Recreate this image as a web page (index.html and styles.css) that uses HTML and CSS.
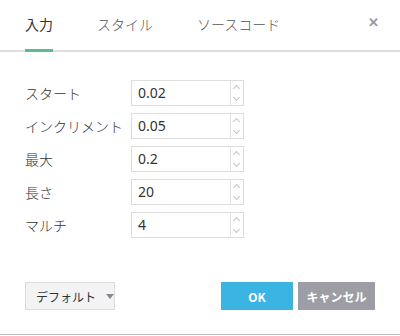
FILE: index.html
```html
<!DOCTYPE html>
<html lang="ja">
<head>
    <meta charset="UTF-8" />
    <meta name="viewport" content="width=device-width, initial-scale=1.0"/>
    <title>入力</title>
    <link rel="stylesheet" href="styles.css">
</head>
<body>
    <div class="dialog">
        <div class="tabs">
            <span class="tab active">入力</span>
            <span class="tab">スタイル</span>
            <span class="tab">ソースコード</span>
            <span class="close">&#x2715;</span>
        </div>

        <form class="fields">
            <div class="row">
                <label>スタート</label>
                <div class="spin"><span class="value">0.02</span><span class="arrows"><i class="up"></i><i class="down"></i></span></div>
            </div>
            <div class="row">
                <label>インクリメント</label>
                <div class="spin"><span class="value">0.05</span><span class="arrows"><i class="up"></i><i class="down"></i></span></div>
            </div>
            <div class="row">
                <label>最大</label>
                <div class="spin"><span class="value">0.2</span><span class="arrows"><i class="up"></i><i class="down"></i></span></div>
            </div>
            <div class="row">
                <label>長さ</label>
                <div class="spin"><span class="value">20</span><span class="arrows"><i class="up"></i><i class="down"></i></span></div>
            </div>
            <div class="row">
                <label>マルチ</label>
                <div class="spin"><span class="value">4</span><span class="arrows"><i class="up"></i><i class="down"></i></span></div>
            </div>
        </form>

        <div class="footer">
            <button type="button" class="btn-default">デフォルト<span class="caret"></span></button>
            <div class="actions">
                <button type="button" class="btn-ok">OK</button>
                <button type="button" class="btn-cancel">キャンセル</button>
            </div>
        </div>
    </div>
</body>
</html>
```

FILE: styles.css
```css
body {
    margin: 0;
    background: #ffffff;
    font-family: "Noto Sans CJK JP", "Noto Sans", sans-serif;
    color: #444;
}
.dialog {
    width: 400px;
    height: 335px;
    border-bottom: 1px solid #bbb;
    box-sizing: border-box;
    display: flex;
    flex-direction: column;
}
.tabs {
    display: flex;
    align-items: flex-start;
    height: 50px;
    padding: 0 21px 0 25px;
    border-bottom: 2px solid #ddd;
    position: relative;
}
.tab {
    font-size: 14px;
    font-weight: 300;
    line-height: 20px;
    padding-top: 14px;
    height: 36px;
    margin-right: 44px;
    color: #555;
    position: relative;
}
.tab.active {
    color: #333;
    font-weight: normal;
}
.tab.active::after {
    content: "";
    position: absolute;
    left: 0;
    right: 0;
    bottom: -2px;
    height: 3px;
    background: #5bbd8c;
}
.close {
    margin-left: auto;
    font-size: 13px;
    line-height: 20px;
    padding-top: 12px;
    color: #999;
    font-weight: bold;
}
.fields {
    margin: 0;
    padding: 28px 0 0 25px;
    display: flex;
    flex-direction: column;
    gap: 7px;
}
.row {
    display: flex;
    align-items: center;
    height: 26px;
}
.row label {
    width: 106px;
    font-size: 14px;
    font-weight: 300;
    color: #333;
}
.spin {
    width: 113px;
    height: 26px;
    box-sizing: border-box;
    border: 1px solid #ddd;
    display: flex;
}
.value {
    flex: 1;
    padding-left: 6px;
    font-size: 14px;
    line-height: 24px;
    font-family: "Noto Sans", sans-serif;
    color: #333;
}
.arrows {
    width: 12px;
    border-left: 1px solid #e2e2e2;
    display: flex;
    flex-direction: column;
}
.arrows i {
    flex: 1;
    position: relative;
}
.arrows i::before {
    content: "";
    position: absolute;
    left: 3px;
    width: 4px;
    height: 4px;
    border-left: 1px solid #c4c4c4;
    border-top: 1px solid #c4c4c4;
}
.arrows .up::before {
    top: 5px;
    transform: rotate(45deg);
}
.arrows .down::before {
    top: 2px;
    transform: rotate(225deg);
}
.footer {
    display: flex;
    align-items: center;
    justify-content: space-between;
    padding: 0 25px;
    margin-top: 44px;
}
.footer button {
    height: 28px;
    border: none;
    font-family: "Noto Sans CJK JP", sans-serif;
    font-size: 12px;
    cursor: pointer;
}
.btn-default {
    width: 90px;
    background: #f3f3f5;
    border: 1px solid #dcdcdc !important;
    color: #333;
    display: flex;
    align-items: center;
    padding: 0 0 0 10px;
}
.caret {
    margin-left: 10px;
    border-left: 4px solid transparent;
    border-right: 4px solid transparent;
    border-top: 5px solid #888;
}
.actions {
    display: flex;
    gap: 5px;
}
.btn-ok {
    width: 72px;
    background: #3bb4e4;
    color: #fff;
    font-weight: bold;
}
.btn-cancel {
    width: 77px;
    background: #9c9da5;
    color: #fff;
    font-weight: bold;
}
```
